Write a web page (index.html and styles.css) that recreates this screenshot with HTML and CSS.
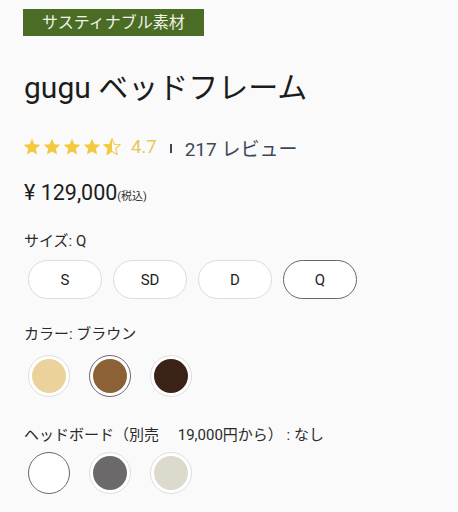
FILE: index.html
```html
<!DOCTYPE html>
<html lang="ja">
<head>
  <meta charset="UTF-8">
  <title>gugu ベッドフレーム</title>
  <link rel="stylesheet" href="styles.css">
</head>
<body>

<div class="product">
  <span class="badge">サスティナブル素材</span>

  <h1 class="title">gugu ベッドフレーム</h1>

  <div class="rating">
    <span class="stars">
      <svg viewBox="0 0 24 24"><path class="full" d="M12 17.27L18.18 21l-1.64-7.03L22 9.24l-7.19-.61L12 2 9.19 8.63 2 9.24l5.46 4.73L5.82 21z"/></svg>
      <svg viewBox="0 0 24 24"><path class="full" d="M12 17.27L18.18 21l-1.64-7.03L22 9.24l-7.19-.61L12 2 9.19 8.63 2 9.24l5.46 4.73L5.82 21z"/></svg>
      <svg viewBox="0 0 24 24"><path class="full" d="M12 17.27L18.18 21l-1.64-7.03L22 9.24l-7.19-.61L12 2 9.19 8.63 2 9.24l5.46 4.73L5.82 21z"/></svg>
      <svg viewBox="0 0 24 24"><path class="full" d="M12 17.27L18.18 21l-1.64-7.03L22 9.24l-7.19-.61L12 2 9.19 8.63 2 9.24l5.46 4.73L5.82 21z"/></svg>
      <svg viewBox="0 0 24 24">
        <path class="outline" d="M12 17.27L18.18 21l-1.64-7.03L22 9.24l-7.19-.61L12 2 9.19 8.63 2 9.24l5.46 4.73L5.82 21z"/>
        <path class="full" d="M12 2L9.19 8.63 2 9.24l5.46 4.73L5.82 21 12 17.27z"/>
      </svg>
    </span>
    <span class="score">4.7</span>
    <span class="sep"></span>
    <span class="reviews">217 レビュー</span>
  </div>

  <div class="price">¥ 129,000<small>(税込)</small></div>

  <div class="option">
    <div class="option-label">サイズ: Q</div>
    <div class="sizes">
      <button class="size">S</button>
      <button class="size">SD</button>
      <button class="size">D</button>
      <button class="size selected">Q</button>
    </div>
  </div>

  <div class="option">
    <div class="option-label">カラー: ブラウン</div>
    <div class="swatches">
      <span class="swatch"><span class="dot natural"></span></span>
      <span class="swatch selected"><span class="dot brown"></span></span>
      <span class="swatch"><span class="dot dark"></span></span>
    </div>
  </div>

  <div class="option headboard">
    <div class="option-label">ヘッドボード（別売　 19,000円から） : なし</div>
    <div class="swatches">
      <span class="swatch selected"><span class="dot white"></span></span>
      <span class="swatch"><span class="dot gray"></span></span>
      <span class="swatch"><span class="dot beige"></span></span>
    </div>
  </div>
</div>

</body>
</html>
```

FILE: styles.css
```css
body {
  margin: 0;
  background: #fafafa;
  color: #222;
  font-family: Roboto, "Noto Sans CJK JP", sans-serif;
}

.product {
  padding: 9px 24px 0 24px;
}

.badge {
  display: inline-block;
  margin-left: -1px;
  height: 27px;
  line-height: 27px;
  padding: 0 19px;
  background: #4a6c24;
  color: #f2f2ea;
  font-size: 16px;
}

.title {
  margin: 35px 0 0 0;
  font-size: 30px;
  font-weight: 400;
  line-height: 34px;
  color: #1c1c1c;
}

.rating {
  margin-top: 30px;
  height: 24px;
  display: flex;
  align-items: center;
}

.stars {
  display: flex;
  margin-left: -2px;
}

.stars svg {
  width: 20px;
  height: 20px;
}

.stars .full {
  fill: #f4c93e;
}

.stars .outline {
  fill: none;
  stroke: #f4c93e;
  stroke-width: 1.3;
  stroke-linejoin: round;
}

.score {
  margin-left: 9px;
  font-size: 18.5px;
  color: #e6c860;
}

.sep {
  display: inline-block;
  width: 2px;
  height: 9px;
  background: #3b4656;
  margin: 3px 13px 0 13px;
}

.reviews {
  font-size: 19px;
  color: #3b4858;
}

.price {
  margin-top: 20px;
  font-size: 21.5px;
  line-height: 28px;
  color: #1c1c1c;
}

.price small {
  font-size: 11px;
  color: #333;
}

.option {
  margin-top: 20px;
}

.option-label {
  font-size: 15px;
  line-height: 20px;
  color: #2a2a2a;
}

.sizes {
  display: flex;
  gap: 11px;
  margin-top: 9px;
  padding-left: 4px;
}

.size {
  width: 74px;
  height: 39px;
  border: 1px solid #dcdcdc;
  border-radius: 20px;
  background: #fff;
  color: #222;
  font-family: Roboto, sans-serif;
  font-size: 15px;
}

.size.selected {
  border: 1.5px solid #676767;
}

.option + .option {
  margin-top: 25px;
}

.option.headboard {
  margin-top: 28px;
}

.swatches {
  display: flex;
  gap: 19px;
  margin-top: 11px;
  padding-left: 4px;
}

.headboard .swatches {
  margin-top: 7px;
}

.swatch {
  width: 42px;
  height: 42px;
  box-sizing: border-box;
  border: 1px solid #dedede;
  border-radius: 50%;
  background: #fff;
  display: flex;
  align-items: center;
  justify-content: center;
}

.swatch.selected {
  border: 1.5px solid #6a6a6a;
}

.dot {
  width: 34px;
  height: 34px;
  border-radius: 50%;
}

.natural { background: #ebd29d; }
.brown { background: #8c6135; }
.dark { background: #3a2316; }
.white { background: #fff; }
.gray { background: #6b696a; }
.beige { background: #dcd9cd; }
```
